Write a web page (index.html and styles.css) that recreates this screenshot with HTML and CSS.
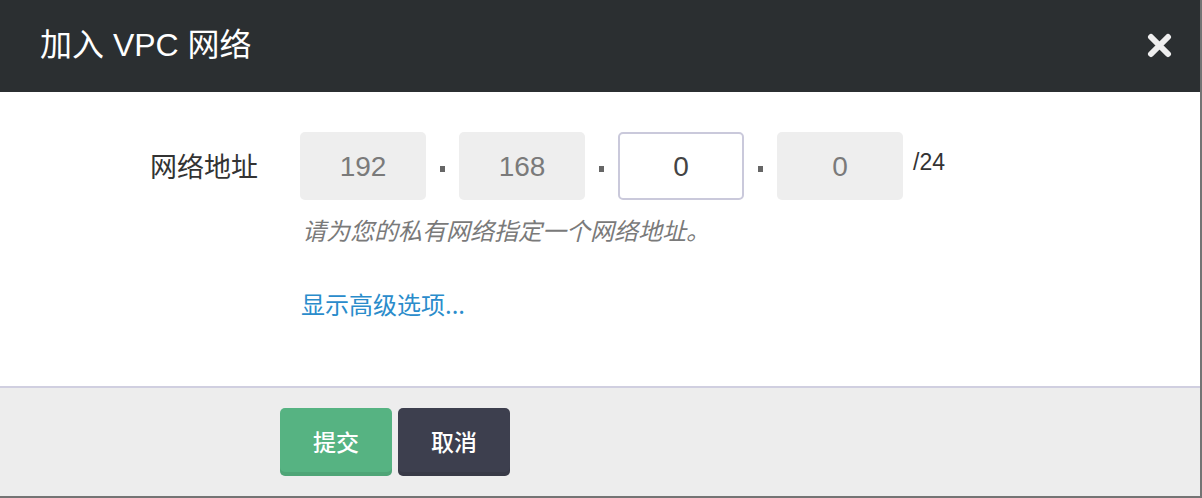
FILE: index.html
```html
<!DOCTYPE html>
<html lang="zh-CN">
<head>
<meta charset="utf-8">
<title>加入 VPC 网络</title>
<link rel="stylesheet" href="styles.css">
</head>
<body>
<div class="dialog">
  <div class="dialog-header">
    <h1 class="dialog-title">加入 VPC 网络</h1>
    <button class="close-btn" aria-label="关闭">
      <svg width="25" height="25" viewBox="0 0 25 25"><path d="M4 4 L21 21 M21 4 L4 21" stroke="#eeeeee" stroke-width="6" stroke-linecap="round"/></svg>
    </button>
  </div>
  <div class="dialog-body">
    <div class="form-row">
      <label class="form-label">网络地址</label>
      <div class="form-field">
        <div class="ip-inputs">
          <div class="ip-box disabled">192</div>
          <span class="ip-dot"></span>
          <div class="ip-box disabled">168</div>
          <span class="ip-dot"></span>
          <div class="ip-box active">0</div>
          <span class="ip-dot"></span>
          <div class="ip-box disabled">0</div>
          <span class="ip-mask">/24</span>
        </div>
        <p class="hint">请为您的私有网络指定一个网络地址。</p>
        <a class="adv-link" href="#">显示高级选项...</a>
      </div>
    </div>
  </div>
  <div class="dialog-footer">
    <button class="btn btn-primary">提交</button>
    <button class="btn btn-dark">取消</button>
  </div>
</div>
</body>
</html>
```

FILE: styles.css
```css
* { box-sizing: border-box; }
html, body { margin: 0; padding: 0; background: #ffffff; }
body { font-family: "Liberation Sans", "Noto Sans CJK SC", sans-serif; }

.dialog {
  width: 1202px;
  height: 498px;
  border-right: 2px solid #747474;
  border-bottom: 2px solid #747474;
  display: flex;
  flex-direction: column;
}

.dialog-header {
  height: 92px;
  background: #2b2f31;
  display: flex;
  align-items: center;
  justify-content: space-between;
  padding: 0 28px 2px 40px;
}
.dialog-title {
  margin: 0;
  color: #ffffff;
  font-family: "Liberation Sans", "Noto Sans CJK SC", sans-serif;
  font-size: 32px;
  font-weight: normal;
  line-height: 1;
}
.close-btn {
  background: none;
  border: 0;
  padding: 0;
  width: 25px;
  height: 25px;
  display: flex;
}

.dialog-body {
  height: 296px;
  padding-top: 40px;
  border-bottom: 2px solid #d0cfe0;
}
.form-row {
  display: flex;
  gap: 42px;
}
.form-label {
  width: 258px;
  text-align: right;
  font-family: "Noto Sans CJK SC", sans-serif;
  font-size: 27px;
  color: #333333;
  line-height: 68px;
  height: 68px;
}
.form-field { display: flex; flex-direction: column; align-items: flex-start; }
.ip-inputs { display: flex; align-items: center; }
.ip-box {
  width: 126px;
  height: 68px;
  border-radius: 5px;
  display: flex;
  align-items: center;
  justify-content: center;
  font-size: 28px;
  padding-top: 1px;
}
.ip-box.disabled { background: #eeeeee; color: #7a7a7a; }
.ip-box.active { background: #ffffff; border: 2px solid #cac9db; color: #444444; }
.ip-dot {
  width: 5px;
  height: 6px;
  background: #666666;
  margin: 6px 14px 0 14px;
}
.ip-mask {
  align-self: flex-start;
  margin: 17px 0 0 10px;
  font-size: 23px;
  color: #333333;
  line-height: 26px;
}
.hint {
  margin: 12px 0 0 2px;
  font-family: "Noto Sans CJK SC", sans-serif;
  font-style: italic;
  font-size: 24px;
  line-height: 36px;
  color: #7a7a7a;
}
.adv-link {
  margin: 38px 0 0 1px;
  font-family: "Noto Sans CJK SC", sans-serif;
  font-size: 24px;
  line-height: 36px;
  color: #2a8ccb;
  text-decoration: none;
}

.dialog-footer {
  flex: 1;
  background: #ededed;
  display: flex;
  align-items: flex-start;
  gap: 6px;
  padding: 20px 0 0 280px;
}
.btn {
  width: 112px;
  height: 68px;
  border: 0;
  border-radius: 5px;
  color: #ffffff;
  font-family: "Noto Sans CJK SC", sans-serif;
  font-size: 23px;
  font-weight: 500;
  padding: 0 0 3px;
  box-shadow: inset 0 -4px 0 rgba(0, 0, 0, 0.08);
}
.btn-primary { background: #56b382; }
.btn-dark { background: #3d3f4e; }
```
